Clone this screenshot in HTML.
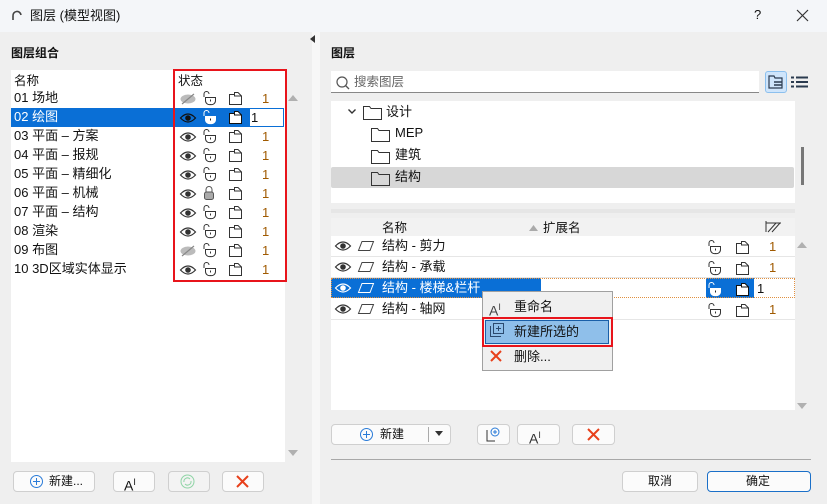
<!DOCTYPE html><html><head><meta charset="utf-8"><style>
*{box-sizing:border-box;margin:0;padding:0}
body{width:827px;height:504px;background:#efefef;font-family:"Liberation Sans","Noto Sans CJK SC",sans-serif;font-size:12px;color:#111;position:relative;overflow:hidden}
.a{position:absolute}
.t{position:absolute;white-space:nowrap;line-height:14px}
.btn{position:absolute;background:#fbfbfb;border:1px solid #cfcfcf;border-radius:4px;height:21px}
.num{color:#a05a00}
.red{border:2px solid #e8141b}
svg{position:absolute;overflow:visible}
</style></head><body>
<div class="a" style="left:0;top:0;width:827px;height:32px;background:#f4f6f9"></div>
<svg style="left:11px;top:10px" width="12" height="12"><path d="M2 10 V6 A4 4 0 0 1 10 5" fill="none" stroke="#444" stroke-width="1.6"/></svg>
<div class="t" style="left:30px;top:9px;font-size:13px">图层 (模型视图)</div>
<div class="t" style="left:754px;top:8px;font-size:13px">?</div>
<svg style="left:797px;top:10px" width="11" height="11"><path d="M0 0L11 11M11 0L0 11" stroke="#333" stroke-width="1.2"/></svg>

<div class="t" style="left:11px;top:46px;font-weight:bold">图层组合</div>
<div class="a" style="left:11px;top:70px;width:274px;height:392px;background:#fff"></div>
<div class="t" style="left:14px;top:74px;font-size:12.5px">名称</div>
<div class="t" style="left:178px;top:74px;font-size:12.5px">状态</div>
<div class="a" style="left:11px;top:108px;width:164px;height:19px;background:#0a6fd6"></div>
<div class="a" style="left:175px;top:108px;width:74px;height:19px;background:#0a6fd6"></div>
<div class="a" style="left:249px;top:108px;width:35px;height:19px;background:#fff;border:1px solid #0a6fd6"></div>
<div id="L"></div>
<div class="a red" style="left:173px;top:69px;width:114px;height:213px"></div>
<svg style="left:288px;top:94px" width="10" height="8"><path d="M0 7L5 1L10 7Z" fill="#b0b0b0"/></svg>
<svg style="left:288px;top:449px" width="10" height="8"><path d="M0 1L5 7L10 1Z" fill="#b0b0b0"/></svg>

<div class="btn" style="left:13px;top:471px;width:82px"></div>
<svg style="left:30px;top:475px" width="13" height="13"><circle cx="6.5" cy="6.5" r="6" fill="none" stroke="#2a7bd8"/><path d="M6.5 3V10M3 6.5H10" stroke="#2a7bd8"/></svg>
<div class="t" style="left:49px;top:474px">新建...</div>
<div class="btn" style="left:113px;top:471px;width:42px"></div>
<div class="t" style="left:124px;top:475px;font-size:14px">A<sup style="font-size:9px">I</sup></div>
<div class="btn" style="left:168px;top:471px;width:42px;background:#f3f3f3"></div>
<svg style="left:180px;top:474px" width="15" height="15"><circle cx="7.5" cy="7.5" r="6.5" fill="none" stroke="#8fd4a5"/><path d="M4 8A3.5 3.5 0 0 1 10 5M11 7A3.5 3.5 0 0 1 5 10" fill="none" stroke="#8fd4a5"/></svg>
<div class="btn" style="left:222px;top:471px;width:42px"></div>
<svg style="left:236px;top:475px" width="13" height="13"><path d="M1 1L12 12M12 1L1 12" stroke="#e8401b" stroke-width="2"/></svg>

<div class="a" style="left:312px;top:32px;width:8px;height:472px;background:#f7f7f7"></div>
<svg style="left:310px;top:35px" width="6" height="8"><path d="M5 0L0 4L5 8Z" fill="#333"/></svg>

<div class="t" style="left:331px;top:46px;font-weight:bold">图层</div>
<div class="a" style="left:331px;top:71px;width:428px;height:22px;background:#fff;border-bottom:1px solid #888"></div>
<svg style="left:336px;top:76px" width="14" height="14"><circle cx="6" cy="6" r="5" fill="none" stroke="#555" stroke-width="1.2"/><path d="M9.5 9.5L13 13" stroke="#555" stroke-width="1.3"/></svg>
<div class="t" style="left:354px;top:75px;color:#666;font-size:12.5px">搜索图层</div>
<div class="a" style="left:765px;top:71px;width:22px;height:22px;background:#cfe5fb;border:1px solid #8cc0ee;border-radius:3px"></div>
<svg style="left:768px;top:75px" width="16" height="14"><path d="M1 1H6L7 3H14V13H1Z" fill="none" stroke="#2b3b4f" stroke-width="1.2"/><path d="M6 7H14M6 10H14" stroke="#2b3b4f" stroke-width="1.6"/></svg>
<svg style="left:791px;top:76px" width="17" height="12"><path d="M0 1.5H3M5 1.5H17M0 6H3M5 6H17M0 10.5H3M5 10.5H17" stroke="#2b3b4f" stroke-width="2"/></svg>
<div class="a" style="left:331px;top:101px;width:464px;height:102px;background:#fff"></div>
<div class="a" style="left:331px;top:167px;width:463px;height:21px;background:#d7d7d7;border-radius:2px"></div>
<svg style="left:348px;top:109px" width="8" height="6"><path d="M0.5 0.5L4 4L7.5 0.5" fill="none" stroke="#333" stroke-width="1.4"/></svg>
<div id="F"></div>
<div class="t" style="left:386px;top:105px;font-size:13px">设计</div>
<div class="t" style="left:395px;top:126px;font-size:13px">MEP</div>
<div class="t" style="left:395px;top:148px;font-size:13px">建筑</div>
<div class="t" style="left:395px;top:170px;font-size:13px">结构</div>
<div class="a" style="left:801px;top:147px;width:3px;height:38px;background:#777"></div>

<div class="a" style="left:331px;top:209px;width:464px;height:4px;background:#e6e6e6"></div>
<div class="a" style="left:331px;top:218px;width:464px;height:192px;background:#fff"></div>
<div class="a" style="left:331px;top:218px;width:464px;height:18px;background:#f2f2f2"></div>
<div class="t" style="left:382px;top:221px;font-size:12.5px">名称</div>
<svg style="left:529px;top:225px" width="9" height="6"><path d="M0 6L4.5 0L9 6Z" fill="#aaa"/></svg>
<div class="t" style="left:543px;top:221px;font-size:12.5px">扩展名</div>
<svg style="left:766px;top:221px" width="15" height="11"><path d="M0 2H15M0 0V11M2 11L10 2M6 11L14 2" stroke="#333" fill="none" stroke-width="1"/></svg>
<div class="a" style="left:331px;top:256px;width:464px;height:1px;background:#e6e6e6"></div>
<div class="a" style="left:331px;top:277px;width:464px;height:1px;background:#e6e6e6"></div>
<div class="a" style="left:331px;top:319px;width:464px;height:1px;background:#e6e6e6"></div>
<div class="a" style="left:331px;top:278px;width:210px;height:20px;background:#0a6fd6"></div>
<div class="a" style="left:706px;top:278px;width:48px;height:20px;background:#0a6fd6"></div>
<div class="a" style="left:331px;top:278px;width:464px;height:20px;border:1px dotted #e09040"></div>
<div id="R"></div>
<svg style="left:797px;top:241px" width="10" height="8"><path d="M0 7L5 1L10 7Z" fill="#b0b0b0"/></svg>
<svg style="left:797px;top:402px" width="10" height="8"><path d="M0 1L5 7L10 1Z" fill="#b0b0b0"/></svg>

<div class="a" style="left:482px;top:291px;width:131px;height:80px;background:#f0f0f0;border:1px solid #a0a0a0"></div>
<div class="t" style="left:489px;top:300px;font-size:14px;color:#444">A<sup style="font-size:9px">I</sup></div>
<div class="t" style="left:514px;top:300px;font-size:13px">重命名</div>
<div class="a" style="left:485px;top:320px;width:124px;height:24px;background:#8fbfea;border:1px solid #1a5fa8"></div>
<div class="a red" style="left:482px;top:317px;width:131px;height:30px"></div>
<svg style="left:490px;top:323px" width="14" height="14"><rect x="3.5" y="0.5" width="10" height="10" fill="none" stroke="#2b4a6f"/><path d="M0.5 3V13.5H11M8.5 3V8M6 5.5H11" stroke="#2b4a6f" fill="none"/></svg>
<div class="t" style="left:514px;top:325px;font-size:13px">新建所选的</div>
<svg style="left:490px;top:350px" width="12" height="12"><path d="M1 1L11 11M11 1L1 11" stroke="#e8401b" stroke-width="2"/></svg>
<div class="t" style="left:514px;top:350px;font-size:13px">删除...</div>

<div class="btn" style="left:331px;top:424px;width:120px"></div>
<div class="a" style="left:428px;top:427px;width:1px;height:15px;background:#aaa"></div>
<svg style="left:360px;top:428px" width="13" height="13"><circle cx="6.5" cy="6.5" r="6" fill="none" stroke="#2a7bd8"/><path d="M6.5 3V10M3 6.5H10" stroke="#2a7bd8"/></svg>
<div class="t" style="left:380px;top:427px">新建</div>
<svg style="left:435px;top:431px" width="8" height="5"><path d="M0 0H8L4 5Z" fill="#333"/></svg>
<div class="btn" style="left:477px;top:424px;width:33px"></div>
<svg style="left:486px;top:427px" width="14" height="15"><path d="M1 3V14H9" fill="none" stroke="#333"/><circle cx="9" cy="5" r="4" fill="none" stroke="#2a7bd8"/><path d="M9 3V7M7 5H11" stroke="#2a7bd8"/></svg>
<div class="btn" style="left:517px;top:424px;width:43px"></div>
<div class="t" style="left:529px;top:428px;font-size:14px;color:#333">A<sup style="font-size:9px">I</sup></div>
<div class="btn" style="left:572px;top:424px;width:43px"></div>
<svg style="left:587px;top:428px" width="13" height="13"><path d="M1 1L12 12M12 1L1 12" stroke="#e8401b" stroke-width="2"/></svg>
<div class="a" style="left:331px;top:459px;width:480px;height:1px;background:#a8a8a8"></div>
<div class="btn" style="left:622px;top:471px;width:76px"></div>
<div class="t" style="left:648px;top:474px">取消</div>
<div class="btn" style="left:707px;top:471px;width:104px;border-color:#1a6fc8"></div>
<div class="t" style="left:746px;top:474px">确定</div>
<script>
function eye(x,y,c,off){return off?`<svg style="left:${x}px;top:${y}px" width="16" height="12"><ellipse cx="8" cy="6" rx="7.5" ry="4.5" fill="#bbb"/><path d="M14 1L2 11" stroke="#888" stroke-width="1.2"/></svg>`:`<svg style="left:${x}px;top:${y}px" width="16" height="12"><path d="M0.5 6Q8 -2 15.5 6Q8 14 0.5 6Z" fill="none" stroke="${c}" stroke-width="1.2"/><circle cx="8" cy="6" r="2.8" fill="${c}"/></svg>`}
function lock(x,y,c,f,closed){return closed?`<svg style="left:${x}px;top:${y}px" width="12" height="14"><path d="M3 6V3.5A3 3 0 0 1 9 3.5V6" fill="none" stroke="#555"/><rect x="1.5" y="6" width="9" height="7.5" rx="2" fill="#aaa" stroke="#555"/></svg>`:`<svg style="left:${x}px;top:${y}px" width="14" height="14"><path d="M1 6V3A2.5 2.5 0 0 1 6 3" fill="none" stroke="${c}"/><path d="M2.5 6.5H12.5V9.5A4 4 0 0 1 7.5 13.5A4 4 0 0 1 2.5 9.5Z" fill="${f}" stroke="${c}"/><path d="M7.5 8.5V10.5" stroke="${f=='#fff'?'#222':c}"/></svg>`}
function pg(x,y,c,f){return `<svg style="left:${x}px;top:${y}px" width="13" height="13"><path d="M0.5 2.5H5.5V0.5H9L12.5 4V12.5H0.5Z" fill="${f}" stroke="${c}"/><path d="M5.5 2.5V4H12.5" fill="none" stroke="${c}"/></svg>`}
var names=["01 场地","02 绘图","03 平面 – 方案","04 平面 – 报规","05 平面 – 精细化","06 平面 – 机械","07 平面 – 结构","08 渲染","09 布图","10 3D区域实体显示"],h="";
names.forEach((n,i)=>{var y=89+i*19,s=i==1,c=s?"#fff":"#333";
h+=`<div class="t" style="left:14px;top:${y+2}px;font-size:13px;color:${s?'#fff':'#111'}">${n}</div>`;
h+=eye(180,y+4,s?"#111":"#333",i==0||i==8);
h+=lock(203,y+2,s?"#fff":"#333",s?"#fff":"none",i==5);
h+=pg(229,y+3,s?"#111":"#333",s?"#fff":"none");
h+=`<div class="t ${s?'':'num'}" style="left:${s?251:262}px;top:${y+3}px;font-size:13px">1</div>`;});
document.getElementById("L").outerHTML=h;
h="";[[363,105],[371,127],[371,149],[371,171]].forEach(p=>{h+=`<svg style="left:${p[0]}px;top:${p[1]}px" width="19" height="15"><path d="M0.5 1.5H6.5L8 3.5H18.5V14.5H0.5Z" fill="none" stroke="#333"/></svg>`});
document.getElementById("F").outerHTML=h;
h="";["结构 - 剪力","结构 - 承载","结构 - 楼梯&栏杆","结构 - 轴网"].forEach((n,i)=>{var y=237+i*21,s=i==2;
h+=eye(335,y+3,s?"#fff":"#333",false);
h+=`<svg style="left:358px;top:${y+4}px" width="16" height="10"><path d="M4 0.5H15.5L12 9.5H0.5Z" fill="none" stroke="${s?'#fff':'#444'}"/></svg>`;
h+=`<div class="t" style="left:382px;top:${y+2}px;font-size:13px;color:${s?'#fff':'#111'}">${n}</div>`;
h+=lock(708,y+3,s?"#fff":"#333",s?"#fff":"none",false);
h+=pg(736,y+4,s?"#111":"#333",s?"#fff":"none");
h+=`<div class="t ${s?'':'num'}" style="left:${s?757:769}px;top:${y+3}px;font-size:13px">1</div>`;});
document.getElementById("R").outerHTML=h;
</script>
</body></html>
